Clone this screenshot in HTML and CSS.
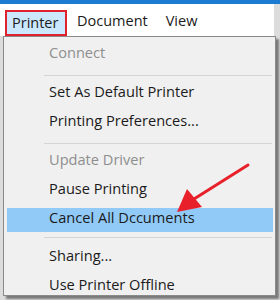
FILE: index.html
```html
<!DOCTYPE html>
<html lang="en">
<head>
  <meta charset="UTF-8" />
  <title>Printer menu</title>
  <link rel="stylesheet" href="styles.css">
</head>
<body>
  <div class="titlebar"></div>
  <div class="menubar">
    <span class="top-item active">Printer</span>
    <span class="top-item">Document</span>
    <span class="top-item">View</span>
  </div>

  <div class="menu">
    <div class="item disabled">Connect</div>
    <div class="sep"></div>
    <div class="item">Set As Default Printer</div>
    <div class="item">Printing Preferences...</div>
    <div class="sep"></div>
    <div class="item disabled">Update Driver</div>
    <div class="item">Pause Printing</div>
    <div class="item hover">Cancel All Dccuments</div>
    <div class="sep last"></div>
    <div class="item">Sharing...</div>
    <div class="item">Use Printer Offline</div>
  </div>

  <svg class="arrow" width="280" height="300" viewBox="0 0 280 300">
    <line x1="248" y1="165" x2="194" y2="199" stroke="#e8202a" stroke-width="3" stroke-linecap="round"/>
    <polygon points="177,212 187,189 202,207" fill="#e8202a"/>
  </svg>
</body>
</html>
```

FILE: styles.css
```css
body {
  margin: 0;
  width: 280px;
  height: 300px;
  overflow: hidden;
  background: #dcdcdc;
  font-family: "Open Sans", "Noto Sans", sans-serif;
  font-size: 14.6px;
  color: #1b1b1b;
  position: relative;
}
.titlebar {
  height: 4px;
  background: #1a7bd0;
}
.menubar {
  height: 32px;
  width: 274px;
  background: #fff;
  display: flex;
  align-items: flex-end;
  padding-left: 5px;
  box-sizing: border-box;
}
.top-item {
  height: 26px;
  line-height: 22px;
  margin-left: 18px;
  font-size: 14.5px;
  box-sizing: border-box;
}
.top-item.active {
  width: 62px;
  margin-left: 0;
  margin-right: -8px;
  padding-left: 5px;
  background: #cce8ff;
  border: 2px solid #e0222c;
}
.menu {
  width: 273px;
  height: 260px;
  margin-left: 3px;
  background: #f0f0f0;
  border: 1px solid #8a8a8a;
  box-sizing: border-box;
  padding-top: 4px;
  overflow: hidden;
  display: flex;
  flex-direction: column;
  box-shadow: 3px 3px 2px rgba(0, 0, 0, 0.45);
}
.item {
  flex-shrink: 0;
  height: 24px;
  line-height: 19px;
  padding: 0 0 5px 42px;
  margin: 2px 2px 3px 3px;
  box-sizing: border-box;
}
.item.disabled {
  color: #8e8e8e;
}
.item.hover {
  background: #91c9f7;
}
.sep {
  flex-shrink: 0;
  height: 10px;
  margin: 0 3px 0 40px;
  background: linear-gradient(#d5d5d5, #d5d5d5) center / 100% 1px no-repeat;
}
.sep.last {
  height: 9px;
  background-position: center 2px;
}
.arrow {
  position: absolute;
  left: 0;
  top: 0;
}
```
